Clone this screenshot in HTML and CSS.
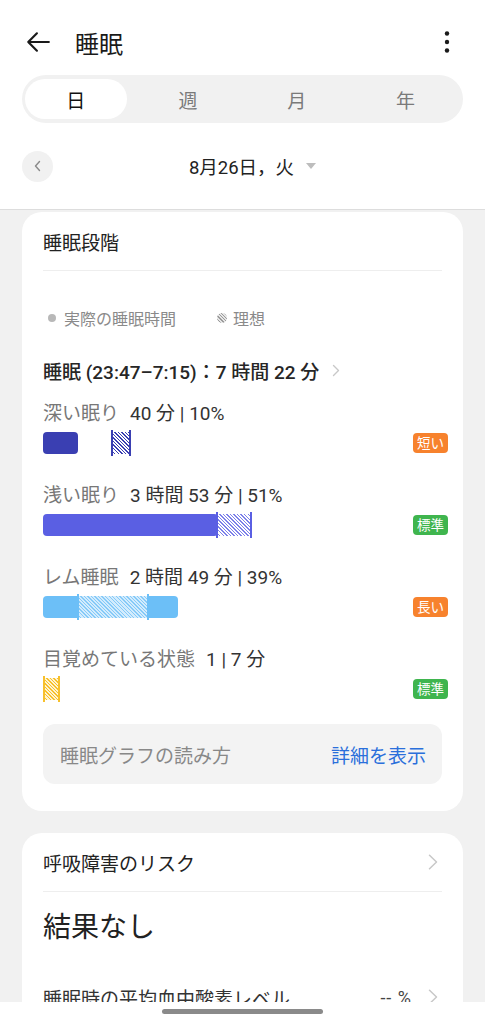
FILE: index.html
```html
<!DOCTYPE html>
<html lang="ja">
<head>
<meta charset="utf-8">
<title>睡眠</title>
<link rel="stylesheet" href="styles.css">
</head>
<body>
<div class="screen">
  <header class="top">
    <div class="appbar">
      <svg class="back" width="26" height="26" viewBox="0 0 24 24"><path d="M22 12H3M11 4l-8 8 8 8" fill="none" stroke="#1a1a1a" stroke-width="2" stroke-linecap="round" stroke-linejoin="round"/></svg>
      <h1 class="title">睡眠</h1>
      <svg class="kebab" width="24" height="24" viewBox="0 0 24 24"><circle cx="12" cy="3.5" r="2.2" fill="#1a1a1a"/><circle cx="12" cy="12" r="2.2" fill="#1a1a1a"/><circle cx="12" cy="20.5" r="2.2" fill="#1a1a1a"/></svg>
    </div>
    <div class="seg">
      <div class="seg-item active">日</div>
      <div class="seg-item">週</div>
      <div class="seg-item">月</div>
      <div class="seg-item">年</div>
    </div>
    <div class="date-row">
      <div class="circle-btn"><svg width="10" height="12" viewBox="0 0 10 12"><path d="M6.5 1.5L2.5 6l4 4.5" fill="none" stroke="#8a8a8a" stroke-width="1.4" stroke-linecap="round" stroke-linejoin="round"/></svg></div>
      <div class="date"><span class="date-text">8月26日，火</span><span class="tri"></span></div>
      <div class="spacer"></div>
    </div>
  </header>

  <main class="content">
    <section class="card">
      <div class="card-head">睡眠段階</div>
      <div class="legend">
        <span class="dot"></span><span class="legend-text">実際の睡眠時間</span>
        <span class="hatch-dot"></span><span class="legend-text">理想</span>
      </div>
      <div class="summary">
        <span>睡眠 (23:47–7:15)：7 時間 22 分</span>
        <svg class="chev-s" width="9" height="13" viewBox="0 0 9 13"><path d="M1.5 1.5l5 5-5 5" fill="none" stroke="#c8c8c8" stroke-width="1.4" stroke-linecap="round" stroke-linejoin="round"/></svg>
      </div>

      <div class="stage first">
        <div class="stage-label"><span class="name">深い眠り</span><span class="val">40 分 | 10%</span></div>
        <div class="chart-row">
          <div class="track">
            <span class="solid deep" style="left:0;width:35px"></span>
            <span class="ideal deep-i" style="left:68px;width:20px"></span>
          </div>
          <span class="badge orange">短い</span>
        </div>
      </div>

      <div class="stage">
        <div class="stage-label"><span class="name">浅い眠り</span><span class="val">3 時間 53 分 | 51%</span></div>
        <div class="chart-row">
          <div class="track">
            <span class="solid light" style="left:0;width:175px"></span>
            <span class="ideal light-i" style="left:173px;width:36px"></span>
          </div>
          <span class="badge green">標準</span>
        </div>
      </div>

      <div class="stage">
        <div class="stage-label"><span class="name">レム睡眠</span><span class="val">2 時間 49 分 | 39%</span></div>
        <div class="chart-row">
          <div class="track">
            <span class="solid rem" style="left:0;width:135px"></span>
            <span class="ideal rem-i" style="left:34px;width:72px"></span>
          </div>
          <span class="badge orange">長い</span>
        </div>
      </div>

      <div class="stage">
        <div class="stage-label"><span class="name">目覚めている状態</span><span class="val">1 | 7 分</span></div>
        <div class="chart-row">
          <div class="track">
            <span class="ideal awake-i" style="left:0;width:17px"></span>
          </div>
          <span class="badge green">標準</span>
        </div>
      </div>

      <div class="info">
        <span class="info-text">睡眠グラフの読み方</span>
        <span class="info-link">詳細を表示</span>
      </div>
    </section>

    <section class="card card2">
      <div class="card-head row-between">
        <span>呼吸障害のリスク</span>
        <svg class="chev" width="11" height="16" viewBox="0 0 11 16"><path d="M1.5 1.2l7 6.8-7 6.8" fill="none" stroke="#c8c8c8" stroke-width="1.5" stroke-linecap="round" stroke-linejoin="round"/></svg>
      </div>
      <div class="result">結果なし</div>
      <div class="o2-row">
        <span>睡眠時の平均血中酸素レベル</span>
        <span class="o2-right"><span class="o2-val">-- %</span>
        <svg class="chev" width="11" height="16" viewBox="0 0 11 16"><path d="M1.5 1.2l7 6.8-7 6.8" fill="none" stroke="#c8c8c8" stroke-width="1.5" stroke-linecap="round" stroke-linejoin="round"/></svg></span>
      </div>
    </section>
  </main>

  <div class="navbar"><span class="nav-pill"></span></div>
</div>
</body>
</html>
```

FILE: styles.css
```css
* { box-sizing: border-box; }
html, body { margin: 0; padding: 0; }
body {
  background: #f1f1f1;
  font-family: Roboto, "Noto Sans CJK JP", "Noto Sans", sans-serif;
  color: #222;
}
.screen { width: 485px; min-height: 1024px; overflow: hidden; }

.top {
  background: #fff;
  padding-top: 14px;
  padding-bottom: 27px;
  border-bottom: 1px solid #dddddd;
}
.appbar {
  height: 56px;
  display: flex;
  align-items: center;
  padding: 0 26px 0 25px;
}
.title {
  margin: 0 0 0 24px;
  font-size: 24px;
  font-weight: 400;
  color: #1a1a1a;
  flex: 1;
}
.seg {
  margin: 5px 22px 0;
  height: 48px;
  border-radius: 24px;
  background: #f1f1f1;
  padding: 4px 3px;
  display: grid;
  grid-template-columns: repeat(4, 1fr);
}
.seg-item {
  display: flex;
  align-items: center;
  justify-content: center;
  font-size: 19px;
  color: #7a7a7a;
  border-radius: 20px;
}
.seg-item.active {
  background: #fff;
  color: #111;
  margin-right: 7px;
}
.date-row {
  margin-top: 27px;
  height: 32px;
  padding: 0 22px;
  display: grid;
  grid-template-columns: 32px 1fr 32px;
  align-items: center;
}
.circle-btn {
  width: 31px;
  height: 31px;
  border-radius: 50%;
  background: #f1f1f1;
  display: flex;
  align-items: center;
  justify-content: center;
}
.date {
  display: flex;
  align-items: center;
  justify-content: center;
  padding-left: 20px;
}
.date-text { font-size: 18.5px; color: #222; }
.tri {
  width: 0; height: 0;
  margin-left: 12px;
  border-left: 5px solid transparent;
  border-right: 5px solid transparent;
  border-top: 6px solid #bdbdbd;
}

.content { padding-top: 2px; }
.card {
  margin: 0 22px;
  background: #fff;
  border-radius: 20px;
  padding: 0 21px 27px;
}
.card-head {
  height: 59px;
  display: flex;
  align-items: center;
  font-size: 19px;
  color: #222;
  border-bottom: 1px solid #eeeeee;
}
.row-between { justify-content: space-between; }
.chev { margin-right: 3px; }

.legend {
  margin-top: 37px;
  height: 20px;
  display: flex;
  align-items: center;
  font-size: 16px;
  color: #8a8a8a;
}
.dot {
  width: 8px; height: 8px;
  border-radius: 50%;
  background: #b8b8b8;
  margin: 0 8px 0 5px;
}
.hatch-dot {
  width: 10px; height: 10px;
  border-radius: 50%;
  margin: 0 6px 0 41px;
  background: repeating-linear-gradient(45deg, #9a9a9a 0 1px, #e6e6e6 1px 2.4px);
}
.summary {
  margin-top: 30px;
  height: 24px;
  display: flex;
  align-items: center;
  font-size: 19px;
  font-weight: 500;
  color: #262626;
}
.chev-s { margin-left: 13px; }

.stage { margin-top: 26px; }
.stage.first { margin-top: 18px; }
.stage-label {
  height: 22px;
  display: flex;
  align-items: center;
  font-size: 19px;
}
.name { color: #777; }
.val { color: #333; margin-left: 11px; }
.chart-row {
  margin-top: 8px;
  height: 26px;
  display: flex;
  align-items: center;
}
.track { position: relative; flex: 1; height: 26px; }
.solid {
  position: absolute;
  top: 2px;
  height: 22px;
  border-radius: 4px;
}
.deep { background: #3a3fb2; }
.light { background: #5a5fe3; }
.rem { background: #6cbff7; }
.ideal {
  position: absolute;
  top: 0;
  height: 26px;
  padding: 2px 0;
  background-clip: content-box;
  border-left: 2px solid;
  border-right: 2px solid;
}
.deep-i {
  border-color: #3a3fb2;
  background-image: repeating-linear-gradient(45deg, #3a3fb2 0 1px, #ffffff 1px 2.5px);
}
.light-i {
  border-color: #5a5fe3;
  background-image: repeating-linear-gradient(45deg, #7d81ea 0 1px, #ffffff 1px 2.5px);
}
.rem-i {
  border-color: #6cbff7;
  background-image: repeating-linear-gradient(45deg, #86caf8 0 1px, #d3ecfd 1px 2.5px);
}
.awake-i {
  border-color: #f7c02c;
  background-image: repeating-linear-gradient(45deg, #f7c02c 0 1px, #fff3cf 1px 2.5px);
}
.badge {
  width: 35px;
  height: 20px;
  border-radius: 4px;
  color: #fff;
  font-size: 13.5px;
  line-height: 20px;
  text-align: center;
  margin-right: -6px;
}
.orange { background: #f7822d; }
.green { background: #3fb54e; }

.info {
  margin-top: 22px;
  height: 60px;
  border-radius: 12px;
  background: #f3f3f3;
  display: flex;
  align-items: center;
  justify-content: space-between;
  padding: 0 16px 0 17px;
  font-size: 19px;
}
.info-text { color: #888; }
.info-link { color: #2a6fdb; }

.card2 { margin-top: 22px; padding-bottom: 60px; }
.result {
  margin-top: 16px;
  font-size: 28px;
  line-height: 40px;
  color: #222;
}
.o2-row {
  margin-top: 37px;
  height: 24px;
  display: flex;
  align-items: center;
  justify-content: space-between;
  font-size: 19px;
  color: #333;
}
.o2-right { display: flex; align-items: center; }
.o2-val { color: #444; margin-right: 16px; font-size: 18px; letter-spacing: 1px; }

.navbar {
  position: fixed;
  left: 0;
  right: 0;
  bottom: 0;
  height: 22px;
  background: #fff;
  display: flex;
  justify-content: center;
  padding-top: 7px;
}
.nav-pill {
  width: 161px;
  height: 5px;
  border-radius: 3px;
  background: #8a8a8a;
}
```
